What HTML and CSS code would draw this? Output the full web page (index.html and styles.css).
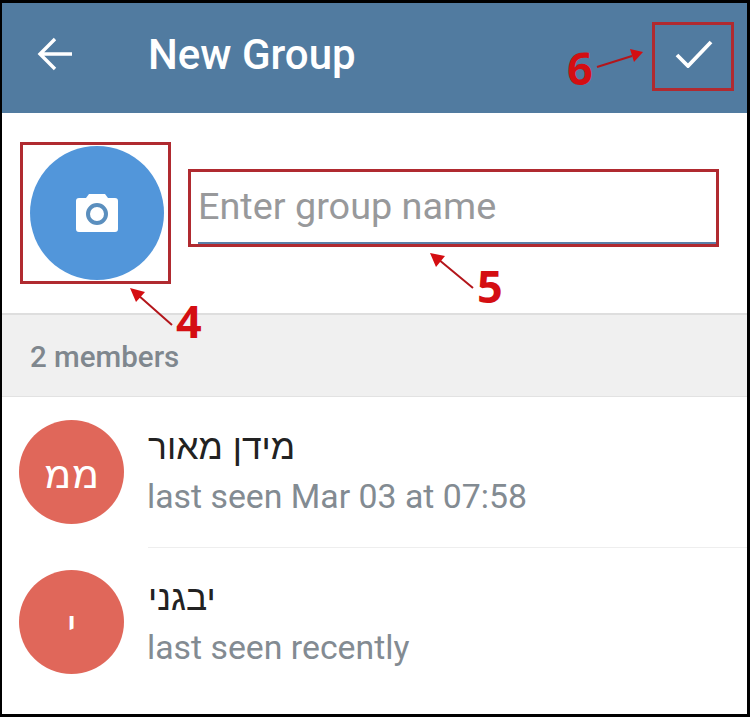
FILE: index.html
```html
<!DOCTYPE html>
<html lang="en">
<head>
    <meta charset="UTF-8">
    <meta name="viewport" content="width=device-width, initial-scale=1.0">
    <title>New Group</title>
    <link rel="stylesheet" href="styles.css">
</head>
<body>
    <div class="frame">
        <header class="header">
            <svg class="back-icon" width="36" height="34" viewBox="0 0 36 34">
                <path d="M35 17H4M18 2L3 17l15 15" fill="none" stroke="#fff" stroke-width="3.4"/>
            </svg>
            <h1 class="title">New Group</h1>
            <svg class="check-icon" width="38" height="28" viewBox="0 0 38 28">
                <path d="M2 15l11 11L36 2" fill="none" stroke="#fff" stroke-width="3.8"/>
            </svg>
        </header>

        <section class="group-row">
            <div class="photo">
                <svg width="44" height="38" viewBox="0 0 44 38">
                    <path d="M14 0h16l3 4h7a3 3 0 0 1 3 3v28a3 3 0 0 1-3 3H4a3 3 0 0 1-3-3V7a3 3 0 0 1 3-3h7z" fill="#fff"/>
                    <circle cx="22" cy="20" r="9" fill="#fff" stroke="#5b8fbe" stroke-width="4"/>
                </svg>
            </div>
            <div class="name-field">Enter group name</div>
        </section>

        <div class="section-title">2 members</div>

        <ul class="members">
            <li class="member">
                <div class="avatar" dir="rtl">ממ</div>
                <div class="member-info">
                    <div class="member-name" dir="rtl">מידן מאור</div>
                    <div class="member-status">last seen Mar 03 at 07:58</div>
                </div>
            </li>
            <li class="member">
                <div class="avatar" dir="rtl">י</div>
                <div class="member-info">
                    <div class="member-name" dir="rtl">יבגני</div>
                    <div class="member-status">last seen recently</div>
                </div>
            </li>
        </ul>

        <!-- red annotations drawn over the screenshot -->
        <div class="mark mark-photo"></div>
        <div class="mark mark-name"></div>
        <div class="mark mark-done"></div>
        <svg class="arrows" width="750" height="717" viewBox="0 0 750 717">
            <g stroke="#b3161b" stroke-width="2">
                <path d="M172 325L138 295M473 288L438 259M597 67L632 56"/>
            </g>
            <g fill="#d40e12">
                <path d="M130 288l15 4-9 10zM430 253l15 3-9 11zM643 52l-13-3 4 13z"/>
            </g>
        </svg>
        <span class="num num-4">4</span>
        <span class="num num-5">5</span>
        <span class="num num-6">6</span>
    </div>
</body>
</html>
```

FILE: styles.css
```css
* {
    box-sizing: border-box;
}

body {
    margin: 0;
    background: #fff;
}

.frame {
    position: relative;
    width: 750px;
    height: 717px;
    border: solid #000;
    border-width: 3px 3px 3px 2px;
    background: #fff;
    overflow: hidden;
    font-family: Roboto, "Liberation Sans", sans-serif;
}

.header {
    display: flex;
    align-items: center;
    height: 110px;
    padding: 0 34px 0 35px;
    background-color: #517ba0;
}

.back-icon {
    margin-top: -8px;
    margin-right: 75px;
}

.title {
    flex: 1;
    margin: -8px 0 0;
    color: #fff;
    font-size: 42px;
    font-weight: 500;
}

.check-icon {
    margin-top: -8px;
}

.group-row {
    display: flex;
    height: 200px;
    padding: 33px 29px 0 28px;
}

.photo {
    display: flex;
    align-items: center;
    justify-content: center;
    flex: none;
    width: 134px;
    height: 134px;
    border-radius: 50%;
    background-color: #5296da;
}

.name-field {
    flex: 1;
    height: 98px;
    margin-left: 34px;
    padding-top: 40px;
    border-bottom: 2px solid #5b7fa8;
    color: #98999b;
    font-size: 37.8px;
    line-height: 41px;
}

.section-title {
    height: 84px;
    padding: 26px 0 0 28px;
    border-top: 2px solid #dedede;
    border-bottom: 1px solid #e2e2e2;
    background-color: #f0f0f0;
    color: #7f878e;
    font-size: 29.5px;
    font-weight: 500;
    line-height: 32px;
}

.members {
    margin: 0;
    padding: 0;
    list-style: none;
}

.member {
    display: flex;
    height: 150px;
    padding: 23px 0 0 17px;
}

.avatar {
    display: flex;
    align-items: center;
    justify-content: center;
    flex: none;
    width: 105px;
    height: 104px;
    border-radius: 50%;
    background-color: #e0675a;
    color: #fff;
    font-family: "Noto Sans", "DejaVu Sans", sans-serif;
    font-size: 41px;
}

.member-info {
    flex: 1;
    margin-left: 24px;
    padding-top: 5px;
}

.member + .member .member-info {
    margin-top: -23px;
    padding-top: 28px;
    border-top: 1px solid #eeeeee;
}

.member-name {
    color: #222;
    font-family: "Liberation Sans", sans-serif;
    font-size: 35.5px;
    line-height: 44px;
    text-align: left;
}

.member-status {
    margin-top: 8px;
    margin-left: -1px;
    color: #838b92;
    font-size: 33.8px;
    line-height: 40px;
}

.mark {
    position: absolute;
    border: 3px solid #b02a30;
}

.mark-photo {
    left: 18px;
    top: 139px;
    width: 151px;
    height: 142px;
}

.mark-name {
    left: 186px;
    top: 166px;
    width: 531px;
    height: 78px;
}

.mark-done {
    left: 650px;
    top: 19px;
    width: 82px;
    height: 69px;
}

.arrows {
    position: absolute;
    left: -2px;
    top: -3px;
}

.num {
    position: absolute;
    color: #d40e12;
    font-family: "Open Sans", sans-serif;
    font-size: 45px;
    font-weight: 700;
    line-height: 50px;
}

.num-4 {
    left: 174px;
    top: 293px;
}

.num-5 {
    left: 475px;
    top: 258px;
}

.num-6 {
    left: 565px;
    top: 40px;
}
```
